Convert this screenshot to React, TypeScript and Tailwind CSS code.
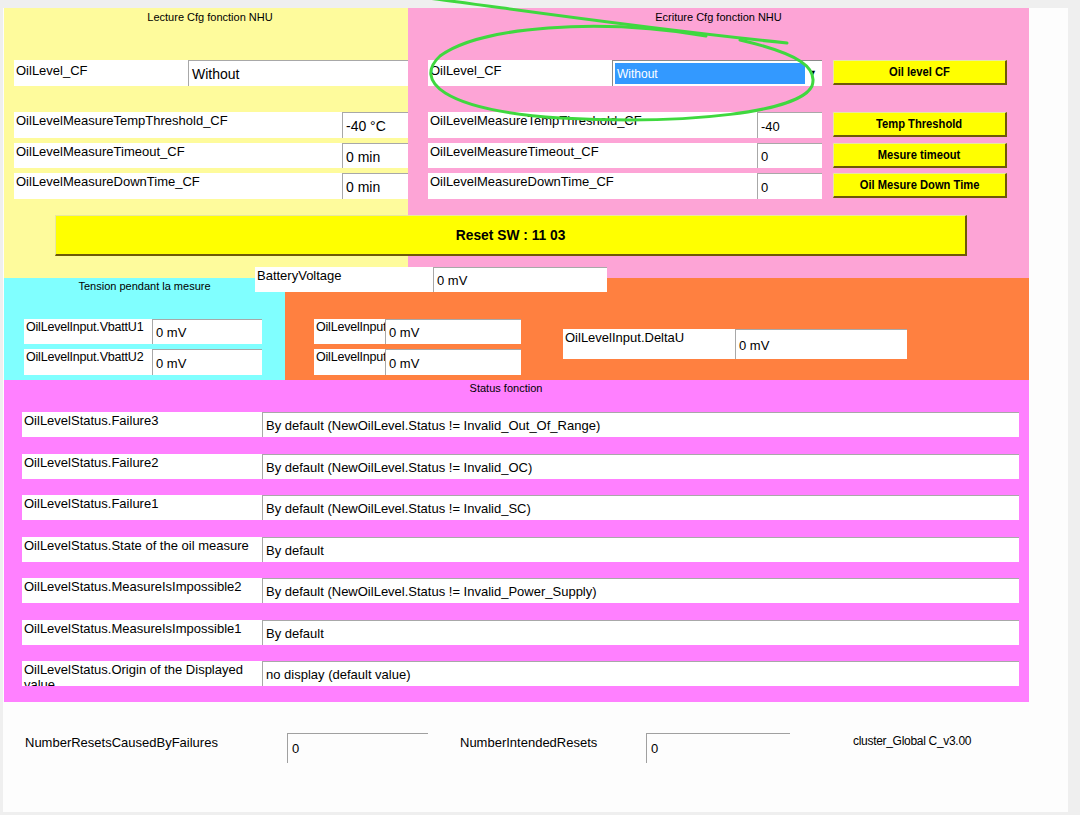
import type { ReactNode } from "react";

/*
  NHU oil level diagnostic panel — LabVIEW style front panel.
  Yellow = read config, pink = write config, cyan/orange = measured voltages,
  magenta = status flags. Green stroke is a hand-drawn annotation on top.
*/

const FONT = "font-['Liberation_Sans',Arial,sans-serif]";

const STATUS = [
  { label: "OilLevelStatus.Failure3", value: "By default (NewOilLevel.Status != Invalid_Out_Of_Range)" },
  { label: "OilLevelStatus.Failure2", value: "By default (NewOilLevel.Status != Invalid_OC)" },
  { label: "OilLevelStatus.Failure1", value: "By default (NewOilLevel.Status != Invalid_SC)" },
  { label: "OilLevelStatus.State of the oil measure", value: "By default" },
  { label: "OilLevelStatus.MeasureIsImpossible2", value: "By default (NewOilLevel.Status != Invalid_Power_Supply)" },
  { label: "OilLevelStatus.MeasureIsImpossible1", value: "By default" },
  { label: "OilLevelStatus.Origin of the Displayed value", value: "no display (default value)" },
];

function Label({
  w,
  h,
  children,
  pt = "pt-0",
  size = "text-[13px]",
}: {
  w: string;
  h: string;
  children: ReactNode;
  pt?: string;
  size?: string;
}) {
  return <div className={`${w} ${h} ${pt} ${size} overflow-hidden bg-white pl-[2px] leading-[15px]`}>{children}</div>;
}

function Value({ w, h, children, size = "text-[14px]" }: { w: string; h: string; children: ReactNode; size?: string }) {
  return (
    <div
      className={`${w} ${h} flex items-center overflow-hidden whitespace-nowrap border-l border-t border-[#a8a8a8] bg-white pl-[3px] pt-[2px] ${size}`}
    >
      {children}
    </div>
  );
}

function YButton({ children }: { children: ReactNode }) {
  return (
    <button className="ml-[11px] flex h-[25px] w-[174px] items-center justify-center overflow-hidden whitespace-nowrap border-b-2 border-l border-r-2 border-t border-b-[#6e5a08] border-l-[#e8e8a0] border-r-[#6e5a08] border-t-[#e8e8a0] bg-[#ffff00] text-black">
      <span className="inline-block scale-x-[0.86] text-[13px] font-bold">{children}</span>
    </button>
  );
}

export default function App() {
  return (
    <div className={`relative h-[815px] w-[1080px] overflow-hidden bg-[#efefef] pb-[3px] pl-[3px] pr-[12px] pt-2 text-black ${FONT}`}>
      <div className="relative h-full bg-[#fdfdfd] pl-px">
        {/* Config read / write */}
        <div className="h-[270px] w-[1025px] bg-[linear-gradient(to_right,#fefb9c_404px,#fda4d6_404px)]">
          <div className="flex">
            <div className="w-[404px]">
              <div className="pt-[2px] pl-[8px] text-center text-[11px] leading-[14px]">Lecture Cfg fonction NHU</div>
              <div className="ml-[10px] mt-[36px] flex">
                <Label w="w-[174px]" h="h-[26px]" pt="pt-[3px]">OilLevel_CF</Label>
                <Value w="w-[220px]" h="h-[26px]">Without</Value>
              </div>
              <div className="ml-[10px] mt-[26px] flex">
                <Label w="w-[328px]" h="h-[26px]" pt="pt-[1px]">OilLevelMeasureTempThreshold_CF</Label>
                <Value w="w-[66px]" h="h-[26px]">-40 °C</Value>
              </div>
              <div className="ml-[10px] mt-[5px] flex">
                <Label w="w-[328px]" h="h-[25px]" pt="pt-[1px]">OilLevelMeasureTimeout_CF</Label>
                <Value w="w-[66px]" h="h-[25px]">0 min</Value>
              </div>
              <div className="ml-[10px] mt-[5px] flex">
                <Label w="w-[328px]" h="h-[26px]" pt="pt-[1px]">OilLevelMeasureDownTime_CF</Label>
                <Value w="w-[66px]" h="h-[26px]">0 min</Value>
              </div>
            </div>

            <div className="w-[621px]">
              <div className="pt-[2px] text-center text-[11px] leading-[14px]">Ecriture Cfg fonction NHU</div>
              <div className="ml-[20px] mt-[36px] flex">
                <Label w="w-[184px]" h="h-[26px]" pt="pt-[3px]">OilLevel_CF</Label>
                <div className="flex h-[26px] w-[210px] border-l border-t border-[#8a8a8a] bg-white p-[2px]">
                  <div className="flex h-full flex-1 items-center bg-[#3399ff] pl-[2px] text-[12px] text-white">Without</div>
                  <div className="flex w-[15px] items-center justify-center text-[9px]">▼</div>
                </div>
                <YButton>Oil level CF</YButton>
              </div>
              <div className="ml-[20px] mt-[26px] flex">
                <Label w="w-[329px]" h="h-[26px]" pt="pt-[1px]">OilLevelMeasureTempThreshold_CF</Label>
                <Value w="w-[65px]" h="h-[26px]" size="text-[13px]">-40</Value>
                <YButton>Temp Threshold</YButton>
              </div>
              <div className="ml-[20px] mt-[5px] flex">
                <Label w="w-[329px]" h="h-[25px]" pt="pt-[1px]">OilLevelMeasureTimeout_CF</Label>
                <Value w="w-[65px]" h="h-[25px]" size="text-[13px]">0</Value>
                <YButton>Mesure timeout</YButton>
              </div>
              <div className="ml-[20px] mt-[5px] flex">
                <Label w="w-[329px]" h="h-[26px]" pt="pt-[1px]">OilLevelMeasureDownTime_CF</Label>
                <Value w="w-[65px]" h="h-[26px]" size="text-[13px]">0</Value>
                <YButton>Oil Mesure Down Time</YButton>
              </div>
            </div>
          </div>

          <button className="ml-[51px] mt-[16px] flex h-[41px] w-[912px] items-center justify-center border-b-2 border-l border-r-2 border-t border-b-[#6e5a08] border-l-[#e8e8a0] border-r-[#6e5a08] border-t-[#e8e8a0] bg-[#ffff00]">
            <span className="inline-block scale-x-[0.92] text-[15px] font-bold">Reset SW : 11 03</span>
          </button>
        </div>

        {/* Voltages during measure */}
        <div className="flex h-[102px] w-[1025px]">
          <div className="w-[281px] bg-[#80ffff]">
            <div className="pt-[1px] text-center text-[11px] leading-[14px]">Tension pendant la mesure</div>
            <div className="ml-[20px] mt-[26px] flex">
              <Label w="w-[128px]" h="h-[25px]" pt="pt-[1px]" size="text-[12.5px] tracking-[-0.2px]">
                OilLevelInput.VbattU1
              </Label>
              <Value w="w-[110px]" h="h-[25px]" size="text-[13px]">0 mV</Value>
            </div>
            <div className="ml-[20px] mt-[5px] flex">
              <Label w="w-[128px]" h="h-[26px]" pt="pt-[1px]" size="text-[12.5px] tracking-[-0.2px]">
                OilLevelInput.VbattU2
              </Label>
              <Value w="w-[110px]" h="h-[26px]" size="text-[13px]">0 mV</Value>
            </div>
          </div>
          <div className="w-[744px] bg-[#ff8040]">
            <div className="mx-auto h-[2px] w-[60px] overflow-hidden text-center text-[11px] leading-[14px]">
              <div className="-mt-[11px]">Mesures</div>
            </div>
            <div className="mt-[39px] flex items-start">
              <div className="ml-[29px] flex flex-col gap-[5px]">
                <div className="flex">
                  <Label w="w-[71px]" h="h-[25px]" pt="pt-[1px]" size="text-[12.5px] tracking-[-0.2px]">
                    <span className="whitespace-nowrap">OilLevelInput.U1</span>
                  </Label>
                  <Value w="w-[136px]" h="h-[25px]" size="text-[13px]">0 mV</Value>
                </div>
                <div className="flex">
                  <Label w="w-[71px]" h="h-[26px]" pt="pt-[1px]" size="text-[12.5px] tracking-[-0.2px]">
                    <span className="whitespace-nowrap">OilLevelInput.U2</span>
                  </Label>
                  <Value w="w-[136px]" h="h-[26px]" size="text-[13px]">0 mV</Value>
                </div>
              </div>
              <div className="ml-[42px] mt-[10px] flex">
                <Label w="w-[172px]" h="h-[30px]" pt="pt-[1px]">OilLevelInput.DeltaU</Label>
                <Value w="w-[172px]" h="h-[30px]" size="text-[13px]">0 mV</Value>
              </div>
            </div>
          </div>
        </div>

        {/* BatteryVoltage sits across the panel borders */}
        <div className="absolute left-[252px] top-[259px] flex">
          <Label w="w-[178px]" h="h-[25px]" pt="pt-[1px]">BatteryVoltage</Label>
          <Value w="w-[174px]" h="h-[25px]" size="text-[13px]">0 mV</Value>
        </div>

        {/* Status */}
        <div className="h-[322px] w-[1025px] bg-[#ff80ff]">
          <div className="pr-[21px] pt-[1px] text-center text-[11px] leading-[14px]">Status fonction</div>
          <div className="ml-[18px] mt-[17px] flex flex-col gap-[16.5px]">
            {STATUS.map((s) => (
              <div key={s.label} className="flex">
                <Label w="w-[240px]" h="h-[25px]" pt="pt-[1px]">{s.label}</Label>
                <Value w="w-[757px]" h="h-[25px]" size="text-[13px]">{s.value}</Value>
              </div>
            ))}
          </div>
        </div>

        {/* Reset counters */}
        <div className="flex items-start text-[13px] leading-[15px]">
          <div className="ml-[21px] mt-[33px] w-[262px]">NumberResetsCausedByFailures</div>
          <div className="mt-[31px] h-[30px] w-[141px] border-l border-t border-[#a0a0a0] pl-[4px] pt-[7px]">0</div>
          <div className="ml-[32px] mt-[33px] w-[186px]">NumberIntendedResets</div>
          <div className="mt-[31px] h-[30px] w-[144px] border-l border-t border-[#a0a0a0] pl-[4px] pt-[7px]">0</div>
          <div className="ml-[63px] mt-[32px] text-[12px] tracking-[-0.3px]">cluster_Global C_v3.00</div>
        </div>
      </div>

      {/* hand-drawn annotation */}
      <svg className="pointer-events-none absolute left-0 top-0" width="1080" height="815" viewBox="0 0 1080 815" fill="none">
        <path d="M428 -2 C 520 10, 640 28, 787 43" stroke="#3fd83f" strokeWidth="3" strokeLinecap="round" />
        <path
          d="M706 36 C 600 18, 480 26, 440 56 C 414 80, 440 110, 560 118 C 690 125, 800 112, 812 86 C 818 68, 800 54, 740 40"
          stroke="#3fd83f"
          strokeWidth="3"
          strokeLinecap="round"
        />
      </svg>
    </div>
  );
}
